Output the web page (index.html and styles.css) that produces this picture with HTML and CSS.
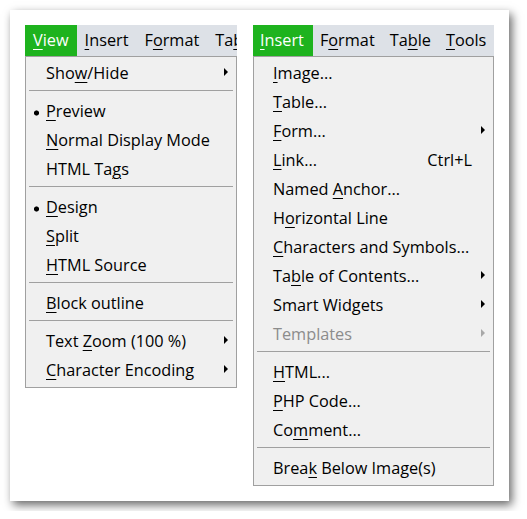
FILE: index.html
```html
<!DOCTYPE html>
<html lang="en">
<head>
    <meta charset="UTF-8">
    <title>View and Insert menus</title>
    <link rel="stylesheet" href="styles.css">
</head>
<body>
    <div class="card">
        <div class="menu menu-view">
            <div class="menubar">
                <span class="bar-item active"><u>V</u>iew</span>
                <span class="bar-item"><u>I</u>nsert</span>
                <span class="bar-item">F<u>o</u>rmat</span>
                <span class="bar-item">Ta<u>b</u>le</span>
            </div>
            <ul class="dropdown">
                <li class="item"><span class="label">Sho<u>w</u>/Hide</span><span class="arrow"></span></li>
                <li class="sep"></li>
                <li class="item checked"><span class="label"><u>P</u>review</span></li>
                <li class="item"><span class="label"><u>N</u>ormal Display Mode</span></li>
                <li class="item"><span class="label">HTML Ta<u>g</u>s</span></li>
                <li class="sep"></li>
                <li class="item checked"><span class="label"><u>D</u>esign</span></li>
                <li class="item"><span class="label"><u>S</u>plit</span></li>
                <li class="item"><span class="label"><u>H</u>TML Source</span></li>
                <li class="sep"></li>
                <li class="item"><span class="label"><u>B</u>lock outline</span></li>
                <li class="sep"></li>
                <li class="item"><span class="label">Text <u>Z</u>oom (100 %)</span><span class="arrow"></span></li>
                <li class="item"><span class="label"><u>C</u>haracter Encoding</span><span class="arrow"></span></li>
            </ul>
        </div>

        <div class="menu menu-insert">
            <div class="menubar">
                <span class="bar-item active"><u>I</u>nsert</span>
                <span class="bar-item">F<u>o</u>rmat</span>
                <span class="bar-item">Ta<u>b</u>le</span>
                <span class="bar-item"><u>T</u>ools</span>
            </div>
            <ul class="dropdown">
                <li class="item"><span class="label"><u>I</u>mage...</span></li>
                <li class="item"><span class="label"><u>T</u>able...</span></li>
                <li class="item"><span class="label"><u>F</u>orm...</span><span class="arrow"></span></li>
                <li class="item"><span class="label"><u>L</u>ink...</span><span class="shortcut">Ctrl+L</span></li>
                <li class="item"><span class="label">Named <u>A</u>nchor...</span></li>
                <li class="item"><span class="label">H<u>o</u>rizontal Line</span></li>
                <li class="item"><span class="label"><u>C</u>haracters and Symbols...</span></li>
                <li class="item"><span class="label">Ta<u>b</u>le of Contents...</span><span class="arrow"></span></li>
                <li class="item"><span class="label">Smart Widgets</span><span class="arrow"></span></li>
                <li class="item disabled"><span class="label">Templates</span><span class="arrow"></span></li>
                <li class="sep"></li>
                <li class="item"><span class="label"><u>H</u>TML...</span></li>
                <li class="item"><span class="label"><u>P</u>HP Code...</span></li>
                <li class="item"><span class="label">Co<u>m</u>ment...</span></li>
                <li class="sep"></li>
                <li class="item"><span class="label">Brea<u>k</u> Below Image(s)</span></li>
            </ul>
        </div>
    </div>
</body>
</html>
```

FILE: styles.css
```css
body {
    margin: 0;
    padding: 10px;
    background: #fff;
    font-family: "Open Sans", "Noto Sans", sans-serif;
    font-size: 16.3px;
    color: #000;
}
.card {
    box-sizing: border-box;
    width: 499px;
    height: 491px;
    padding: 15px;
    background: #fff;
    box-shadow: 3px 4px 9px rgba(0,0,0,0.6);
    display: flex;
    align-items: flex-start;
    gap: 16px;
}
.menu-view {
    width: 212px;
}
.menu-insert {
    width: 241px;
}
.menubar {
    display: flex;
    height: 31px;
    background: #dde1e7;
    white-space: nowrap;
    overflow: hidden;
}
.bar-item {
    padding: 0 8px;
    line-height: 31px;
}
.bar-item.active {
    background: #1eb31e;
    color: #fff;
}
.menu-insert .bar-item {
    padding: 0 8px 0 7px;
}
.menu-insert .bar-item.active {
    padding-right: 9px;
}
u {
    text-decoration-thickness: 1px;
    text-underline-offset: 3px;
}
.dropdown {
    list-style: none;
    margin: 0;
    padding: 2px 0 2px;
    background: #f0f0f0;
    border: 1px solid #a0a0a0;
}
.item {
    display: flex;
    align-items: center;
    height: 29px;
    line-height: 29px;
    padding-right: 8px;
    white-space: nowrap;
}
.item::before {
    content: "";
    flex: none;
    width: 20px;
    align-self: stretch;
}
.menu-insert .item::before {
    width: 19px;
}
.item.checked::before {
    background: radial-gradient(circle at 10.5px 16px, #000 2.2px, transparent 2.9px);
}
.arrow {
    margin-left: auto;
    margin-top: -3px;
    width: 0;
    height: 0;
    border-left: 4px solid #000;
    border-top: 4px solid transparent;
    border-bottom: 4px solid transparent;
}
.shortcut {
    margin-left: auto;
    margin-right: 13px;
}
.disabled {
    color: #8c8c8c;
}
.disabled .arrow {
    border-left-color: #a8a8a8;
}
.sep {
    height: 1px;
    margin: 2px 3px 6px;
    background: #a0a0a0;
}
```
